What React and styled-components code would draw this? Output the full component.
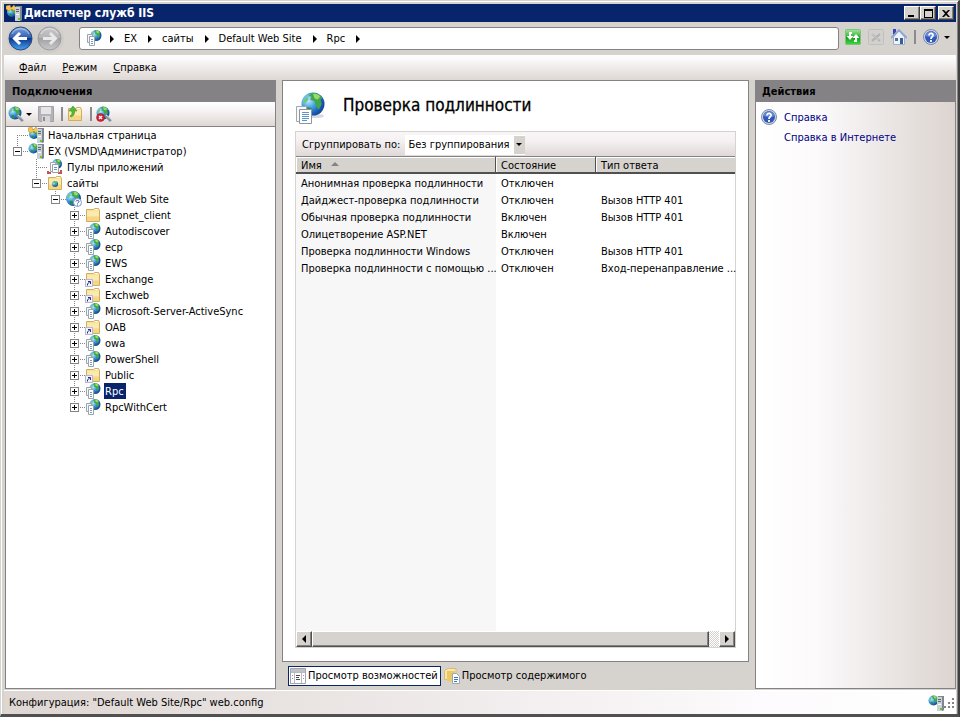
import React, { useId, useState } from 'react'
import styled, { createGlobalStyle } from 'styled-components'

const GlobalStyle = createGlobalStyle`
*{
  box-sizing:border-box;
}
body{
  margin:0;
  background-color:#D6D3CE;
}
body, button, select, table{
  font-family:"DejaVu Sans Condensed", "DejaVu Sans", sans-serif;
  font-size:11px;
  line-height:16px;
  color:#000;
}
button{
  padding:0;
  border:0;
  background:none;
}
ul{
  list-style:none;
  margin:0;
  padding:0;
}
svg{
  display:block;
  flex:none;
}
`

const Window = styled.div`
height:100vh;
display:flex;
flex-direction:column;
background-color:#D6D3CE;
border:1px solid #D6D3CE;
border-right:2px solid #404040;
border-bottom:3px solid #505050;
box-shadow:inset 1px 1px #FFF, inset -1px 0 #848284;
padding:3px 2px 0 3px;
`
const TitleBar = styled.header`
height:18px;
flex:none;
display:flex;
align-items:center;
gap:2px;
padding:0 2px;
background-color:#08246B;
`
const Title = styled.h1`
flex:1;
margin:0;
font-size:12px;
line-height:18px;
font-weight:bold;
color:#FFF;
`
const CaptionButton = styled.button`
width:16px;
height:14px;
display:flex;
justify-content:center;
align-items:center;
margin-left:${props => (props.$gap ? '0' : '-2px')};
background-color:#D6D3CE;
border:1px solid;
border-color:#FFF #404040 #404040 #FFF;
box-shadow:inset -1px -1px #848284;
`
const NavBar = styled.nav`
height:33px;
flex:none;
display:flex;
align-items:center;
padding:0 5px 0 3px;
`
const History = styled.div`
display:flex;
align-items:center;
gap:4px;
padding:0 2px 0 1px;
height:28px;
border-radius:14px;
background-color:#CFCCC9;
margin-right:15px;
`
const Address = styled.ol`
flex:1;
height:23px;
display:flex;
align-items:center;
margin:0 6px 0 0;
padding:0 6px;
list-style:none;
background-color:#FFF;
border:1px solid #848284;
border-radius:3px;
`
const Crumb = styled.li`
display:flex;
align-items:center;
`
const CrumbButton = styled.button`
padding:0 11px 0 10px;
`
const RootButton = styled.button`
padding:0 8px 2px 0;
`
const CrumbArrow = styled.span`
width:0;
height:0;
border:4px solid transparent;
border-left:4px solid #000;
border-right:0;
`
const NavTools = styled.div`
display:flex;
align-items:center;
gap:7px;
padding-bottom:3px;
`
const DownArrow = styled.span`
width:0;
height:0;
border:3px solid transparent;
border-top:3px solid #000;
border-bottom:0;
`
const Separator = styled.span`
width:2px;
height:14px;
background-color:#8C8A8C;
`
const MenuBar = styled.div`
height:25px;
flex:none;
display:flex;
align-items:center;
gap:16px;
padding:0 15px;
background:linear-gradient(#FFF, #FAF7F8 20%, #DDD8D3);
`
const MenuItem = styled.button`
&::first-letter{
  text-decoration:underline;
}
`
const Workspace = styled.main`
flex:1;
min-height:0;
display:grid;
grid-template-columns:271px minmax(0, 1fr) 201px;
gap:6px;
padding:0 0 1px 1px;
`
const Panel = styled.section`
display:flex;
flex-direction:column;
min-height:0;
border:1px solid #848284;
background:${props => (props.$shaded ? 'linear-gradient(to right, #FFF, #FDFAFC 30%, #EEEAE9 60%, #DCD4CF)' : '#FFF')};
`
const PanelTitle = styled.h2`
height:21px;
flex:none;
margin:0;
padding:2px 6px;
font-size:11px;
line-height:18px;
font-weight:bold;
background-color:#848284;
`
const ToolStrip = styled.div`
height:25px;
flex:none;
display:flex;
align-items:center;
padding:0 2px;
border-bottom:1px solid #848284;
background:linear-gradient(#FFF, #F6F2F3 40%, #DDD8D3);
`
const StripButton = styled.button`
display:flex;
align-items:center;
gap:${props => props.$gap || 1}px;
margin-right:${props => props.$after || 7}px;
`
const StripSeparator = styled(Separator)`
margin-right:4px;
`
const Tree = styled.ul`
flex:1;
padding-left:2px;
overflow:hidden;
`
const Branches = styled.ul`
padding-left:19px;
`
const NodeRow = styled.div`
height:16px;
display:flex;
align-items:center;
`
const dots = side => `repeating-linear-gradient(to ${side}, #848284 0 1px, transparent 1px 2px)`

const Joint = styled.span`
width:20px;
height:16px;
flex:none;
display:flex;
align-items:center;
padding-left:5px;
background:
  ${dots('right')} 9px 8px / 11px 1px no-repeat,
  ${dots('bottom')} 9px ${props => (props.$first ? '8px' : '0')} / 1px ${props => (props.$last ? '8px' : '16px')} no-repeat;
`
const Expander = styled.button`
width:9px;
height:9px;
margin-top:1px;
border:1px solid #848284;
background:
  linear-gradient(#000, #000) center / 5px 1px no-repeat,
  linear-gradient(#000, #000) center / 1px ${props => (props.$open ? '0' : '5px')} no-repeat,
  #FFF;
`
const NodeLabel = styled.button`
height:16px;
margin-left:3px;
padding:2px 2px 0 1px;
line-height:14px;
white-space:nowrap;
color:${props => (props.$selected ? '#FFF' : '#000')};
background-color:${props => (props.$selected ? '#08246B' : 'transparent')};
`
const Center = styled.div`
min-width:0;
min-height:0;
display:flex;
flex-direction:column;
`
const Feature = styled(Panel)`
flex:1;
padding:0 12px 13px;
`
const FeatureHead = styled.div`
height:50px;
flex:none;
display:flex;
align-items:center;
gap:15px;
padding:4px 1px 0;
`
const FeatureTitle = styled.h2`
margin:0;
font-size:17px;
line-height:24px;
font-weight:normal;
padding-bottom:6px;
-webkit-text-stroke:0.3px #000;
`
const ListBox = styled.div`
flex:1;
min-height:0;
display:flex;
flex-direction:column;
border:1px solid #D6D3CE;
`
const GroupBar = styled.div`
height:24px;
flex:none;
display:flex;
align-items:center;
gap:5px;
padding:2px 0 0 6px;
background:linear-gradient(#FAF6F8, #F4EFF0 40%, #DED9D6);
`
const SelectWrap = styled.span`
position:relative;
display:flex;
&::after{
  content:"";
  position:absolute;
  right:3px;
  top:8px;
  border:3px solid transparent;
  border-top-color:#000;
  border-bottom:0;
  pointer-events:none;
}
`
const GroupSelect = styled.select`
appearance:none;
width:120px;
height:20px;
padding:0 12px 0 3px;
border:1px solid #FFF;
border-width:1px 0;
border-radius:0;
background:linear-gradient(to left, #D6D3CE 11px, #FFF 11px);
`
const ListArea = styled.div`
flex:1;
min-height:0;
background:linear-gradient(to right, #F7F7F7 200px, #FFF 200px);
`
const List = styled.table`
width:100%;
table-layout:fixed;
border-collapse:separate;
border-spacing:0;
`
const HeadCell = styled.th`
height:18px;
padding:2px 5px 0;
line-height:13px;
text-align:left;
font-weight:normal;
background-color:#D6D3CE;
border-top:1px solid #848284;
border-bottom:2px solid #505050;
border-right:${props => (props.$open ? '0' : '1px solid #505050')};
box-shadow:inset 1px 1px #FFF;
`
const SortMark = styled.span`
display:inline-block;
margin:0 0 3px 9px;
border:4px solid transparent;
border-bottom-color:#848284;
border-top:0;
`
const Cell = styled.td`
height:17px;
padding:2px 0 0 5px;
line-height:15px;
white-space:nowrap;
`
const ScrollBar = styled.div`
height:16px;
flex:none;
display:flex;
background:repeating-conic-gradient(#FFF 0 25%, #D6D3CE 0 50%) 0 0 / 2px 2px;
`
const ScrollButton = styled.button`
width:16px;
display:flex;
justify-content:center;
align-items:center;
background-color:#D6D3CE;
border:1px solid;
border-color:#FFF #505050 #505050 #FFF;
box-shadow:inset -1px -1px #848284;
`
const ScrollThumb = styled(ScrollButton)`
flex:1;
margin-right:10px;
`
const Views = styled.div`
height:27px;
flex:none;
display:flex;
align-items:center;
gap:1px;
padding:0 6px;
`
const ViewTab = styled.button`
height:20px;
display:flex;
align-items:center;
gap:2px;
padding:0 2px 0 1px;
border:1px solid ${props => (props.$active ? '#08246B' : 'transparent')};
background-color:${props => (props.$active ? '#FFF' : 'transparent')};
`
const Actions = styled.ul`
padding:5px 5px;
`
const Action = styled.li`
height:20px;
display:flex;
align-items:center;
gap:7px;
padding-left:${props => (props.$plain ? '23px' : '0')};
`
const ActionLink = styled.a`
padding-top:2px;
color:#000084;
text-decoration:none;
`
const StatusBar = styled.footer`
height:24px;
flex:none;
display:flex;
align-items:center;
padding:0 2px 0 5px;
border-top:1px solid #FFF;
background:linear-gradient(to right, #DDD6D2, #F3EEEF 55%, #FDFBFD 80%, #FFF);
`
const StatusText = styled.span`
flex:1;
`

// drawings

const Globe = ({ cx, cy, r }) => {
  const id = useId()
  return (
    <g transform={`translate(${cx} ${cy}) scale(${r / 8})`}>
      <radialGradient id={id} cx="30%" cy="35%" r="75%">
        <stop offset="0" stopColor="#C4ECFC" />
        <stop offset="0.4" stopColor="#4BA6E6" />
        <stop offset="0.75" stopColor="#1D63BE" />
        <stop offset="1" stopColor="#123F92" />
      </radialGradient>
      <circle r="8" fill={`url(#${id})`} />
      <path d="M-1-7.500C2-8 5-6.500 6.500-4L5-3 6 0 4 4 2 1 1-2-2-3-1-5-3-6Z" fill="#43A847" />
      <path d="M0-7C2-7.500 4-6.500 5-5L3-3 1-4Z" fill="#97DB6C" />
      <path d="M-6-4-4-5-3-3-5-1-7 0Z" fill="#6CC887" />
      <path d="M-4 2-1 3 0 5-2 7.500-4 5Z" fill="#2D8B52" />
    </g>
  )
}

const ServerBox = () => (
  <g>
    <path d="M9 3 10 1h6v14l-1 1H9Z" fill="#7F8890" />
    <path d="M9 2h5v14H9z" fill="#C9D1D7" />
    <path d="M10 4.500h3M10 6.500h3" stroke="#5B656E" />
    <path d="M10 9.500h3" stroke="#FFF" />
    <path d="M12 13h2v2h-2z" fill="#68C524" />
  </g>
)

const Folder = () => (
  <g>
    <path d="M1.500 2.500h7l1-1h4l1 2v11h-13z" fill="#F7DF93" stroke="#CFAE5C" />
    <path d="M2 4h12v5H2z" fill="#FBE9B0" />
    <path d="M2 10h12v4H2z" fill="#F4D685" />
    <path d="M10 2.500h3" stroke="#FFF" />
  </g>
)

const AppIcon = () => (
  <svg width="16" height="16" viewBox="0 0 16 16">
    <Globe cx={10} cy={5.5} r={5.5} />
    <g stroke="#9CA3AB">
      <path d="M1.500 4.500h5v8h-5z" fill="#F4F6F8" />
      <path d="M3.500 6.500h5v9h-5z" fill="#FFF" />
    </g>
    <path d="M5 9.500h2M5 11.500h2M5 13.500h2" stroke="#6D9ACB" />
  </svg>
)

const LargeAppIcon = () => (
  <svg width="32" height="32" viewBox="0 0 32 32">
    <ellipse cx="19" cy="24" rx="9" ry="2" fill="#D5D8DC" />
    <Globe cx={17} cy={12} r={11.5} />
    <path d="M0.500 14.500h10v15h-10z" fill="#F8F9FA" stroke="#A3A8AE" />
    <path d="M3.500 17.500h12v14h-12z" fill="#FFF" stroke="#8F959C" />
    <path d="M6 20.500h7M6 22.500h7M6 24.500h7M6 26.500h7M6 28.500h5" stroke="#5C93CE" />
  </svg>
)

const ServerIcon = () => (
  <svg width="16" height="16" viewBox="0 0 16 16">
    <Globe cx={5.5} cy={5.5} r={5} />
    <ServerBox />
  </svg>
)

const StartIcon = () => (
  <svg width="16" height="16" viewBox="0 0 16 16">
    <Globe cx={6} cy={7} r={5} />
    <path d="M0 1 4 0 5 3 8 0 10 3 8 6 6 4 3 6 0 4Z" fill="#F5C64B" stroke="#BB842A" strokeWidth="0.5" />
    <ServerBox />
  </svg>
)

const PoolsIcon = () => (
  <svg width="16" height="16" viewBox="0 0 16 16">
    <Globe cx={10} cy={5} r={5} />
    <path d="M1 12v2h3M11 14h3v-3" fill="none" stroke="#C9524C" strokeWidth="2" />
    <path d="M3.500 3.500h5v9h-5z" fill="#FFF" stroke="#A3A8AE" />
    <path d="M5.500 5.500h6v8h-6z" fill="#FFF" stroke="#9CA1A8" />
    <path d="M7 8.500h3M7 10.500h3" stroke="#7191BC" />
  </svg>
)

const SitesIcon = () => (
  <svg width="16" height="16" viewBox="0 0 16 16">
    <Folder />
    <Globe cx={8} cy={9} r={3} />
  </svg>
)

const SiteIcon = () => (
  <svg width="16" height="16" viewBox="0 0 16 16">
    <Globe cx={7.5} cy={7.5} r={7.5} />
    <circle cx="11.500" cy="11.500" r="4" fill="#FFF" stroke="#7C95CE" />
    <path d="M10 10.500C10 9 13 9 13 10.500S11.500 11.500 11.500 12.500M11.500 13.500v1" fill="none" stroke="#2850A8" />
  </svg>
)

const FolderIcon = () => (
  <svg width="16" height="16" viewBox="0 0 16 16"><Folder /></svg>
)

const LinkedFolderIcon = () => (
  <svg width="16" height="16" viewBox="0 0 16 16">
    <Folder />
    <path d="M0.500 8.500h7v7h-7z" fill="#F3F3FA" stroke="#B5B7CC" />
    <path d="M2.500 14.500V13L5 10.500M3 10.500h2.500V13" fill="none" stroke="#27279B" />
  </svg>
)

const RoundArrow = ({ forward }) => {
  const id = useId()
  return (
    <svg width="25" height="25" viewBox="0 0 25 25">
      <linearGradient id={id} x2="0" y2="1">
        <stop offset="0" stopColor={forward ? '#C9C9CB' : '#7EA6DC'} />
        <stop offset="0.48" stopColor={forward ? '#B3B3B5' : '#2C5CB0'} />
        <stop offset="0.5" stopColor={forward ? '#A1A1A4' : '#0C3590'} />
        <stop offset="1" stopColor={forward ? '#C8C8CA' : '#46A7F0'} />
      </linearGradient>
      <circle cx="12.500" cy="12.500" r="11.500" fill={`url(#${id})`} stroke={forward ? '#9C9C9F' : '#27477E'} />
      <path d="M4 8C7 1 18 1 21 8" fill="none" stroke="#FFF" opacity="0.5" />
      <path
        d="M19 12.500H7M12 7 6.500 12.500 12 18"
        transform={forward ? 'rotate(180 12.500 12.500)' : undefined}
        fill="none"
        stroke={forward ? '#E8E8E8' : '#FFF'}
        strokeWidth="3"
      />
    </svg>
  )
}

const HelpIcon = () => (
  <svg width="16" height="16" viewBox="0 0 16 16">
    <circle cx="8" cy="8" r="7.500" fill="#D3D9E4" stroke="#7C8BA8" />
    <circle cx="8" cy="8" r="6" fill="#3158B8" />
    <path d="M2.500 7C3 1 13 1 13.500 7C10 9 6 8 2.500 7Z" fill="#6489D8" />
    <path d="M6 6.500C6 3.500 10.500 4 10 6.500C9.500 8 8 8 8 10M8 11v2" fill="none" stroke="#FFF" strokeWidth="1.8" />
  </svg>
)

const RefreshIcon = () => {
  const id = useId()
  return (
    <svg width="16" height="16" viewBox="0 0 16 16">
      <linearGradient id={id} x2="0" y2="1">
        <stop offset="0" stopColor="#A6E3A2" />
        <stop offset="0.4" stopColor="#45BC45" />
        <stop offset="0.5" stopColor="#12971C" />
        <stop offset="1" stopColor="#3CDB3C" />
      </linearGradient>
      <rect x="0.500" y="0.500" width="15" height="15" rx="1" fill={`url(#${id})`} stroke="#7CC47C" />
      <path d="M7 3H4v4H1.500L5 11l3.500-4H6V5h1ZM9 13h3V9h2.500L11 5 7.500 9H10v2H9Z" fill="#FFF" />
    </svg>
  )
}

const StopIcon = () => (
  <svg width="16" height="16" viewBox="0 0 16 16">
    <rect x="0.500" y="0.500" width="15" height="15" rx="1" fill="#D3D1CF" stroke="#C2C0BE" />
    <path d="M4 5l8 7M12 5l-8 7" stroke="#B1B0B0" strokeWidth="2" />
    <path d="M4 5l7 6" stroke="#EEE" strokeWidth="0.5" />
  </svg>
)

const HomeIcon = () => (
  <svg width="16" height="16" viewBox="0 0 16 16">
    <path d="M2 0h3v6H2z" fill="#3A48B4" />
    <path d="M2.500 8 8 2l5.500 6v7.500h-11z" fill="#EDF3FA" stroke="#9DB0CC" />
    <path d="M0 9 8 1l8 8" fill="none" stroke="#8FA7D6" strokeWidth="1.8" />
    <path d="M9 9h3v6H9z" fill="#395F99" />
    <path d="M4 9h3v3H4z" fill="#53729C" />
  </svg>
)

const ConnectIcon = ({ remove }) => (
  <svg width="17" height="16" viewBox="0 0 17 16">
    <Globe cx={7} cy={7} r={6.5} />
    <path d="M9 9l3 3 3 3" stroke="#84929D" strokeWidth="3" />
    <path d="M10 9l6 5" stroke="#D5E0E8" />
    {remove && (
      <g>
        <circle cx="4.500" cy="11.500" r="4" fill="#CD2433" stroke="#9E1420" strokeWidth="0.5" />
        <path d="M3 10l3 3M6 10l-3 3" stroke="#FFF" strokeWidth="1.2" />
      </g>
    )}
  </svg>
)

const SaveIcon = () => (
  <svg width="16" height="16" viewBox="0 0 16 16">
    <path d="M0.500 0.500h15v15H2l-1.500-1z" fill="#B4B4B8" stroke="#A2A2A6" />
    <path d="M3 1h10v7H3z" fill="#E5E4E6" />
    <path d="M4 10h8v6H4z" fill="#D8D8DA" />
    <path d="M5 11h2v4H5z" fill="#8C8C91" />
  </svg>
)

const UpFolderIcon = () => (
  <svg width="16" height="16" viewBox="0 0 16 16">
    <Folder />
    <path d="M4 11C7 10 8 7 7.500 5H10L6 0 2 5h2.500C5.500 7 5 9 3 10Z" fill="#51BC38" stroke="#328523" strokeWidth="0.5" />
  </svg>
)

const FeaturesIcon = () => (
  <svg width="16" height="16" viewBox="0 0 16 16">
    <path d="M0.500 0.500h15v15H0.500z" fill="#FFF" stroke="#A3A3A8" />
    <path d="M1 1h14v3H1z" fill="#C0C1C7" />
    <path d="M4.500 4v11M11.500 4v11M1 4.500h14" stroke="#B9BAC0" />
    <path d="M2 7.500h1M2 10.500h1M13 7.500h1M13 10.500h1" stroke="#A08888" />
    <path d="M6 7.500h4M6 9.500h3M6 11.500h4" stroke="#494B52" />
  </svg>
)

const ContentIcon = () => (
  <svg width="16" height="16" viewBox="0 0 16 16">
    <path d="M0.500 2.500 4 0.500h8v11H0.500z" fill="#F9E6AE" stroke="#D9BC72" />
    <path d="M3 3h8v8l-5 3-3-1z" fill="#EBC869" />
    <path d="M8.500 5.500h4l3 3v7h-7z" fill="#FFF" stroke="#9AA4B3" />
    <path d="M10 9.500h4M10 11.500h4M10 13.500h3" stroke="#3975BE" />
  </svg>
)

const GripIcon = () => (
  <svg width="10" height="10" viewBox="0 0 10 10">
    <path d="M8 0h2v2H8zM4 4h2v2H4zM8 4h2v2H8zM0 8h2v2H0zM4 8h2v2H4zM8 8h2v2H8z" fill="#848284" />
  </svg>
)

// data

const tree = [
  { name: 'Начальная страница', icon: StartIcon },
  {
    name: 'EX (VSMD\\Администратор)',
    icon: ServerIcon,
    children: [
      { name: 'Пулы приложений', icon: PoolsIcon },
      {
        name: 'сайты',
        icon: SitesIcon,
        children: [
          {
            name: 'Default Web Site',
            icon: SiteIcon,
            children: [
              { name: 'aspnet_client', icon: FolderIcon, closed: true },
              { name: 'Autodiscover', icon: AppIcon, closed: true },
              { name: 'ecp', icon: AppIcon, closed: true },
              { name: 'EWS', icon: AppIcon, closed: true },
              { name: 'Exchange', icon: LinkedFolderIcon, closed: true },
              { name: 'Exchweb', icon: LinkedFolderIcon, closed: true },
              { name: 'Microsoft-Server-ActiveSync', icon: AppIcon, closed: true },
              { name: 'OAB', icon: LinkedFolderIcon, closed: true },
              { name: 'owa', icon: AppIcon, closed: true },
              { name: 'PowerShell', icon: AppIcon, closed: true },
              { name: 'Public', icon: LinkedFolderIcon, closed: true },
              { name: 'Rpc', icon: AppIcon, closed: true },
              { name: 'RpcWithCert', icon: AppIcon, closed: true },
            ],
          },
        ],
      },
    ],
  },
]

const methods = [
  ['Анонимная проверка подлинности', 'Отключен', ''],
  ['Дайджест-проверка подлинности', 'Отключен', 'Вызов HTTP 401'],
  ['Обычная проверка подлинности', 'Включен', 'Вызов HTTP 401'],
  ['Олицетворение ASP.NET', 'Включен', ''],
  ['Проверка подлинности Windows', 'Отключен', 'Вызов HTTP 401'],
  ['Проверка подлинности с помощью ...', 'Отключен', 'Вход-перенаправление ...'],
]

const TreeNode = ({ node, first, last, selected, onSelect }) => {
  const [open, setOpen] = useState(!node.closed)
  const Icon = node.icon
  return (
    <li>
      <NodeRow>
        <Joint $first={first} $last={last}>
          {(node.children || node.closed) && (
            <Expander $open={open} aria-label={node.name} aria-expanded={open} onClick={() => setOpen(!open)} />
          )}
        </Joint>
        <Icon />
        <NodeLabel $selected={selected === node.name} onClick={() => onSelect(node.name)}>
          {node.name}
        </NodeLabel>
      </NodeRow>
      {open && node.children && (
        <Branches>
          {node.children.map((child, i) => (
            <TreeNode
              key={child.name}
              node={child}
              last={i === node.children.length - 1}
              selected={selected}
              onSelect={onSelect}
            />
          ))}
        </Branches>
      )}
    </li>
  )
}

const Connections = () => {
  const [selected, setSelected] = useState('Rpc')
  return (
    <Panel>
      <PanelTitle>Подключения</PanelTitle>
      <ToolStrip>
        <StripButton aria-label="Подключиться" $after="6"><ConnectIcon /><DownArrow /></StripButton>
        <StripButton aria-label="Сохранить"><SaveIcon /></StripButton>
        <StripSeparator />
        <StripButton aria-label="Вверх"><UpFolderIcon /></StripButton>
        <StripSeparator />
        <StripButton aria-label="Удалить подключение"><ConnectIcon remove /></StripButton>
      </ToolStrip>
      <Tree>
        {tree.map((node, i) => (
          <TreeNode
            key={node.name}
            node={node}
            first={i === 0}
            last={i === tree.length - 1}
            selected={selected}
            onSelect={setSelected}
          />
        ))}
      </Tree>
    </Panel>
  )
}

const Authentication = () => (
  <Feature>
    <FeatureHead>
      <LargeAppIcon />
      <FeatureTitle>Проверка подлинности</FeatureTitle>
    </FeatureHead>
    <ListBox>
      <GroupBar>
        <label htmlFor="group">Сгруппировать по:</label>
        <SelectWrap>
          <GroupSelect id="group">
            <option>Без группирования</option>
          </GroupSelect>
        </SelectWrap>
      </GroupBar>
      <ListArea>
        <List>
          <colgroup>
            <col width="200" />
            <col width="100" />
            <col />
          </colgroup>
          <thead>
            <tr>
              <HeadCell>Имя<SortMark /></HeadCell>
              <HeadCell>Состояние</HeadCell>
              <HeadCell $open>Тип ответа</HeadCell>
            </tr>
          </thead>
          <tbody>
            {methods.map(row => (
              <tr key={row[0]}>
                {row.map((text, i) => <Cell key={i}>{text}</Cell>)}
              </tr>
            ))}
          </tbody>
        </List>
      </ListArea>
      <ScrollBar>
        <ScrollButton aria-label="Влево">
          <svg width="4" height="8" viewBox="0 0 4 8"><path d="M4 0v8L0 4Z" /></svg>
        </ScrollButton>
        <ScrollThumb aria-label="Прокрутка" />
        <ScrollButton aria-label="Вправо">
          <svg width="4" height="8" viewBox="0 0 4 8"><path d="M0 0v8l4-4Z" /></svg>
        </ScrollButton>
      </ScrollBar>
    </ListBox>
  </Feature>
)

const App = () => {
  return (
    <>
      <GlobalStyle />
      <Window>
        <TitleBar>
          <StartIcon />
          <Title>Диспетчер служб IIS</Title>
          <CaptionButton aria-label="Свернуть">
            <svg width="8" height="8" viewBox="0 0 8 8"><path d="M0 6h6v2H0z" /></svg>
          </CaptionButton>
          <CaptionButton aria-label="Развернуть">
            <svg width="9" height="9" viewBox="0 0 9 9"><path d="M0 0h9v9H0zM1 2v6h7V2z" fillRule="evenodd" /></svg>
          </CaptionButton>
          <CaptionButton aria-label="Закрыть" $gap>
            <svg width="8" height="7" viewBox="0 0 8 7"><path d="M0 0h2l2 2 2-2h2L5 3.500 8 7H6L4 5 2 7H0l3-3.500z" /></svg>
          </CaptionButton>
        </TitleBar>
        <NavBar>
          <History>
            <button aria-label="Назад"><RoundArrow /></button>
            <button aria-label="Вперед"><RoundArrow forward /></button>
          </History>
          <Address>
            <Crumb><RootButton aria-label="Корень"><AppIcon /></RootButton><CrumbArrow /></Crumb>
            {['EX', 'сайты', 'Default Web Site', 'Rpc'].map(name => (
              <Crumb key={name}>
                <CrumbButton>{name}</CrumbButton>
                <CrumbArrow />
              </Crumb>
            ))}
          </Address>
          <NavTools>
            <button aria-label="Обновить"><RefreshIcon /></button>
            <button aria-label="Остановить"><StopIcon /></button>
            <button aria-label="Домой"><HomeIcon /></button>
            <Separator />
            <StripButton aria-label="Справка" $gap="5" $after="1"><HelpIcon /><DownArrow /></StripButton>
          </NavTools>
        </NavBar>
        <MenuBar>
          <MenuItem>Файл</MenuItem>
          <MenuItem>Режим</MenuItem>
          <MenuItem>Справка</MenuItem>
        </MenuBar>
        <Workspace>
          <Connections />
          <Center>
            <Authentication />
            <Views>
              <ViewTab $active><FeaturesIcon />Просмотр возможностей</ViewTab>
              <ViewTab><ContentIcon />Просмотр содержимого</ViewTab>
            </Views>
          </Center>
          <Panel $shaded>
            <PanelTitle>Действия</PanelTitle>
            <Actions>
              <Action><HelpIcon /><ActionLink href="#help">Справка</ActionLink></Action>
              <Action $plain><ActionLink href="#online">Справка в Интернете</ActionLink></Action>
            </Actions>
          </Panel>
        </Workspace>
        <StatusBar>
          <StatusText>Конфигурация: "Default Web Site/Rpc" web.config</StatusText>
          <ServerIcon />
          <GripIcon />
        </StatusBar>
      </Window>
    </>
  )
}

export default App
